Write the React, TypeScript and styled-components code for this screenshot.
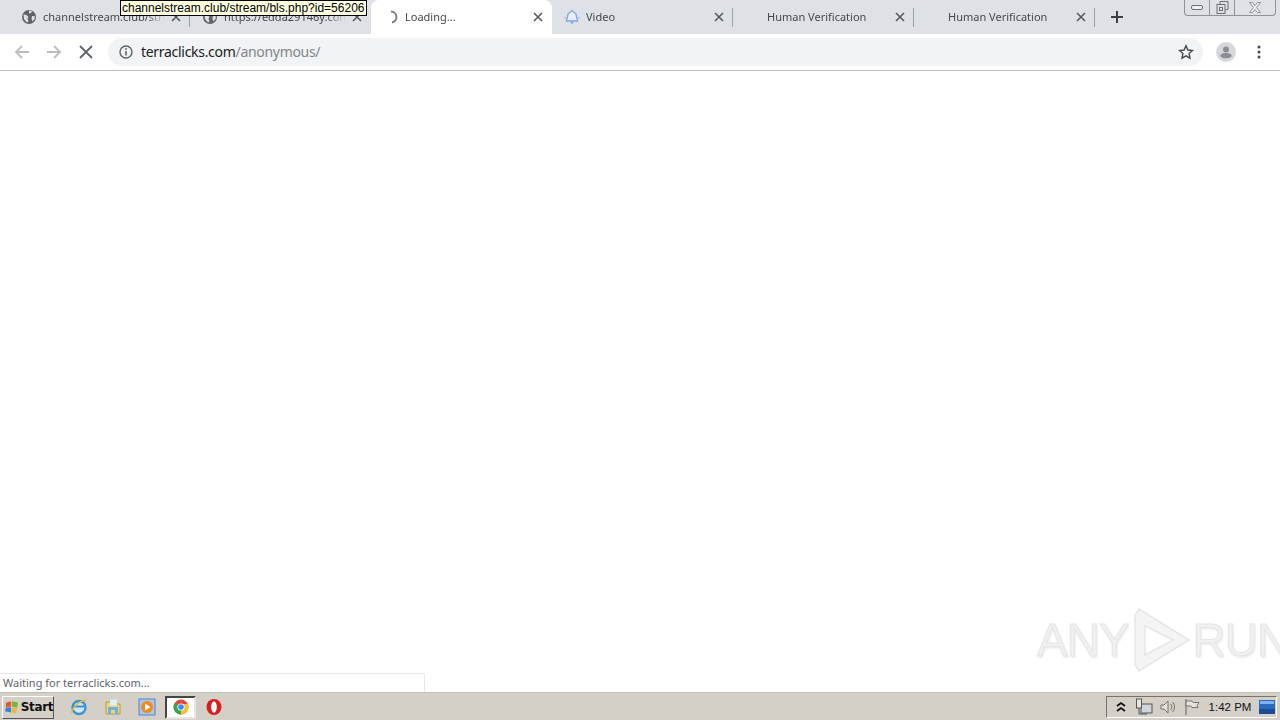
import React from 'react';
import styled, { createGlobalStyle } from 'styled-components';

const GlobalStyle = createGlobalStyle`
  html, body {
    margin: 0;
    padding: 0;
    height: 100%;
    overflow: hidden;
    background: #fff;
  }
  #root {
    height: 100%;
  }
`;

const Page = styled.div`
  position: relative;
  width: 1280px;
  height: 720px;
  display: flex;
  flex-direction: column;
  font-family: "Noto Sans", "Open Sans", sans-serif;
  color: #3c4043;
`;

const TabStrip = styled.div`
  height: 34px;
  flex: none;
  display: flex;
  align-items: flex-start;
  padding-left: 9px;
  background: #dee1e6;
`;

const Tab = styled.div<{ $active?: boolean; $divider?: boolean }>`
  position: relative;
  width: 181px;
  height: 34px;
  flex: none;
  box-sizing: border-box;
  display: flex;
  align-items: center;
  padding: 0 9px 0 12px;
  background: ${p => (p.$active ? '#fff' : 'transparent')};
  border-radius: ${p => (p.$active ? '8px 8px 0 0' : '0')};
  &::after {
    content: "";
    display: ${p => (p.$divider ? 'block' : 'none')};
    position: absolute;
    right: 0;
    top: 8px;
    width: 1px;
    height: 19px;
    background: #9aa0a6;
  }
`;

const Favicon = styled.span`
  width: 16px;
  height: 16px;
  flex: none;
  margin-right: 6px;
  display: flex;
`;

const TabTitle = styled.span<{ $offset?: number }>`
  flex: 1;
  min-width: 0;
  margin-left: ${p => p.$offset ?? 0}px;
  overflow: hidden;
  white-space: nowrap;
  font-size: 11px;
  line-height: 16px;
  color: #45484c;
  -webkit-mask-image: linear-gradient(to right, #000 85%, transparent);
  mask-image: linear-gradient(to right, #000 85%, transparent);
`;

const TabClose = styled.svg`
  width: 10px;
  height: 10px;
  flex: none;
  margin-left: 6px;
`;

const NewTab = styled.svg`
  width: 14px;
  height: 14px;
  flex: none;
  margin: 10px 0 0 15px;
`;

const WindowControls = styled.div`
  margin-left: auto;
  margin-right: 4px;
  width: 92px;
  height: 16px;
  flex: none;
  box-sizing: border-box;
  display: grid;
  grid-template-columns: 25px 25px 1fr;
  border: 1px solid #8e9198;
  border-top: none;
  border-radius: 0 0 4px 4px;
`;

const WindowButton = styled.div<{ $divider?: boolean }>`
  display: flex;
  align-items: center;
  justify-content: center;
  border-right: ${p => (p.$divider ? '1px solid #8e9198' : 'none')};
`;

const Toolbar = styled.div`
  height: 37px;
  flex: none;
  box-sizing: border-box;
  display: flex;
  align-items: center;
  padding: 0 13px 1px 14px;
  background: #fff;
  border-bottom: 1px solid #bcbcbc;
`;

const NavIcon = styled.svg<{ $gap?: number }>`
  width: 16px;
  height: 16px;
  flex: none;
  margin-right: ${p => p.$gap ?? 0}px;
`;

const AddressBar = styled.div`
  width: 1095px;
  height: 28px;
  flex: none;
  box-sizing: border-box;
  display: flex;
  align-items: center;
  padding: 0 9px 0 11px;
  margin-right: 13px;
  background: #f1f3f4;
  border-radius: 14px;
`;

const Url = styled.div`
  flex: 1;
  margin-left: 8px;
  font-size: 14px;
  letter-spacing: -0.3px;
  white-space: nowrap;
  color: #202124;
`;

const UrlPath = styled.span`
  color: #80868b;
`;

const Avatar = styled.svg`
  width: 20px;
  height: 20px;
  flex: none;
  margin-right: 21px;
`;

const Content = styled.div`
  flex: 1;
  background: #fff;
  display: flex;
  align-items: flex-end;
`;

const StatusBubble = styled.div`
  width: 425px;
  height: 19px;
  box-sizing: border-box;
  padding-left: 3px;
  font-size: 11px;
  line-height: 18px;
  color: #5f6368;
  background: #fff;
  border-top: 1px solid #e8e8e8;
  border-right: 1px solid #e8e8e8;
  border-radius: 0 3px 0 0;
`;

const Taskbar = styled.div`
  height: 28px;
  flex: none;
  box-sizing: border-box;
  display: flex;
  align-items: center;
  padding: 1px 3px 0 2px;
  background: #d4d0c8;
  border-top: 1px solid #bfbbb2;
`;

const StartButton = styled.div`
  width: 52px;
  height: 23px;
  flex: none;
  box-sizing: border-box;
  display: flex;
  align-items: center;
  gap: 2px;
  padding-left: 2px;
  margin-right: 16px;
  font-family: "DejaVu Sans", sans-serif;
  font-size: 12px;
  font-weight: 700;
  letter-spacing: -0.4px;
  color: #111;
  border: 1px solid;
  border-color: #fff #555 #555 #fff;
`;

const QuickIcon = styled.svg<{ $gap?: number }>`
  width: 18px;
  height: 18px;
  flex: none;
  margin-right: ${p => p.$gap ?? 0}px;
`;

const ActiveApp = styled.div`
  width: 31px;
  height: 23px;
  flex: none;
  box-sizing: border-box;
  margin-right: 9px;
  display: flex;
  align-items: center;
  justify-content: center;
  background: #fff;
  border: 2px solid;
  border-color: #444 #e8e6e0 #e8e6e0 #444;
`;

const Tray = styled.div`
  margin-left: auto;
  width: 171px;
  height: 22px;
  flex: none;
  box-sizing: border-box;
  display: flex;
  align-items: center;
  padding-left: 5px;
  border: 1px solid;
  border-color: #77736a #fff #fff #77736a;
`;

const TrayIcon = styled.svg<{ $gap?: number }>`
  width: 18px;
  height: 18px;
  flex: none;
  margin-right: ${p => p.$gap ?? 0}px;
`;

const Clock = styled.span`
  width: 58px;
  flex: none;
  text-align: center;
  font-family: "Liberation Sans", sans-serif;
  font-size: 11.5px;
  color: #111;
`;

const LinkTooltip = styled.div`
  position: absolute;
  left: 120px;
  top: 0;
  height: 16px;
  box-sizing: border-box;
  padding: 0 2px 0 1px;
  background: #ffffe1;
  border: 1px solid #000;
  font-family: "Liberation Sans", sans-serif;
  font-size: 12px;
  line-height: 14px;
  white-space: nowrap;
  color: #000;
`;

const Watermark = styled.div`
  position: absolute;
  left: 1037px;
  top: 608px;
  display: flex;
  align-items: center;
  gap: 2px;
  font-family: "Liberation Sans", sans-serif;
  font-size: 46px;
  font-weight: 400;
  letter-spacing: -1px;
  color: #f1f1f1;
  -webkit-text-stroke: 1px #e6e6e6;
  text-shadow: 1px 2px 2px #ececec;
`;

const WatermarkLogo = styled.svg`
  width: 60px;
  height: 64px;
  flex: none;
`;

const CloseGlyph = () => (
  <TabClose viewBox="0 0 10 10">
    <path d="M1 1l8 8M9 1l-8 8" stroke="#55585c" strokeWidth="1.6" />
  </TabClose>
);

const Globe = () => (
  <Favicon>
    <svg viewBox="0 0 16 16" width="16" height="16">
      <circle cx="8" cy="8" r="7" fill="#5f6368" />
      <path d="M2.5 5.5l3 .5 2 2-1 1.5 1 3-1.5 1L3 10zM8 1.5l3 .5-1 2-2 .5zM11 7l3 .3-.6 3-2 2.2-.9-3z" fill="#dee1e6" />
    </svg>
  </Favicon>
);

const Spinner = () => (
  <Favicon>
    <svg viewBox="0 0 16 16" width="16" height="16">
      <path d="M8 2.5a5.5 5.5 0 0 1 1 10.9" fill="none" stroke="#7b8087" strokeWidth="2" />
    </svg>
  </Favicon>
);

const VideoIcon = () => (
  <Favicon>
    <svg viewBox="0 0 16 16" width="16" height="16">
      <path d="M8 1.5l4 3.5 1.5 7h-11L4 5z" fill="#e6edf8" stroke="#7ea6e0" strokeWidth="1.3" />
      <circle cx="1.3" cy="9" r="1" fill="#a9c4ec" />
      <circle cx="14.7" cy="9" r="1" fill="#a9c4ec" />
      <circle cx="8" cy="13.5" r="1.3" fill="#7ea6e0" />
    </svg>
  </Favicon>
);

export default function App() {
  return (
    <Page>
      <GlobalStyle />
      <TabStrip>
        <Tab $divider>
          <Globe />
          <TabTitle>channelstream.club/stream/bls.php</TabTitle>
          <CloseGlyph />
        </Tab>
        <Tab>
          <Globe />
          <TabTitle>https://edda29146y.com/watch</TabTitle>
          <CloseGlyph />
        </Tab>
        <Tab $active>
          <Spinner />
          <TabTitle>Loading...</TabTitle>
          <CloseGlyph />
        </Tab>
        <Tab $divider>
          <VideoIcon />
          <TabTitle>Video</TabTitle>
          <CloseGlyph />
        </Tab>
        <Tab $divider>
          <TabTitle $offset={22}>Human Verification</TabTitle>
          <CloseGlyph />
        </Tab>
        <Tab $divider>
          <TabTitle $offset={22}>Human Verification</TabTitle>
          <CloseGlyph />
        </Tab>
        <NewTab viewBox="0 0 14 14">
          <path d="M7 1v12M1 7h12" stroke="#3c4043" strokeWidth="2" />
        </NewTab>
        <WindowControls>
          <WindowButton $divider>
            <svg width="12" height="6" viewBox="0 0 12 6">
              <rect x="0.5" y="0.5" width="11" height="4" rx="1.5" fill="#eef0f3" stroke="#6b6e73" />
            </svg>
          </WindowButton>
          <WindowButton $divider>
            <svg width="13" height="13" viewBox="0 0 13 13">
              <path d="M4 3V.5h8v8H9.5" fill="none" stroke="#6b6e73" />
              <rect x="1" y="3.5" width="8" height="9" fill="none" stroke="#6b6e73" />
              <rect x="3.5" y="6.5" width="3" height="3" fill="none" stroke="#6b6e73" />
            </svg>
          </WindowButton>
          <WindowButton>
            <svg width="14" height="11" viewBox="0 0 14 11">
              <path d="M1.5.5l3 0 2.5 3 2.500-3 3 0-4 5 4 5-3 0-2.500-3-2.500 3-3 0 4-5z" fill="#eef0f3" stroke="#7b7e83" strokeWidth="0.8" />
            </svg>
          </WindowButton>
        </WindowControls>
      </TabStrip>

      <Toolbar>
        <NavIcon viewBox="0 0 16 16" $gap={16}>
          <path d="M15 8H2M8 2L2 8l6 6" fill="none" stroke="#babcbe" strokeWidth="1.8" />
        </NavIcon>
        <NavIcon viewBox="0 0 16 16" $gap={16}>
          <path d="M1 8h13M8 2l6 6-6 6" fill="none" stroke="#babcbe" strokeWidth="1.8" />
        </NavIcon>
        <NavIcon viewBox="0 0 16 16" $gap={14}>
          <path d="M2 2l12 12M14 2L2 14" fill="none" stroke="#5f6368" strokeWidth="1.8" />
        </NavIcon>
        <AddressBar>
          <svg width="14" height="14" viewBox="0 0 14 14">
            <circle cx="7" cy="7" r="6" fill="none" stroke="#5f6368" strokeWidth="1.4" />
            <path d="M7 6v4.500" stroke="#5f6368" strokeWidth="1.6" />
            <circle cx="7" cy="4" r="0.9" fill="#5f6368" />
          </svg>
          <Url>
            terraclicks.com<UrlPath>/anonymous/</UrlPath>
          </Url>
          <svg width="16" height="16" viewBox="0 0 16 16">
            <path d="M8 1.800l1.900 4.200 4.600.5-3.400 3.100.9 4.500L8 11.800l-4 2.300.9-4.500L1.500 6.500l4.600-.5z" fill="none" stroke="#45484c" strokeWidth="1.400" />
          </svg>
        </AddressBar>
        <Avatar viewBox="0 0 20 20">
          <circle cx="10" cy="10" r="10" fill="#d5d7da" />
          <circle cx="10" cy="7.500" r="3" fill="#8a8d91" />
          <path d="M4 14c1-2.500 3.500-3 6-3s5 .5 6 3c-1.200 1.500-3.500 2.300-6 2.300S5.200 15.500 4 14z" fill="#8a8d91" />
        </Avatar>
        <svg width="4" height="14" viewBox="0 0 4 14">
          <circle cx="2" cy="2" r="1.500" fill="#45484c" />
          <circle cx="2" cy="7" r="1.500" fill="#45484c" />
          <circle cx="2" cy="12" r="1.500" fill="#45484c" />
        </svg>
      </Toolbar>

      <Content>
        <StatusBubble>Waiting for terraclicks.com...</StatusBubble>
      </Content>

      <Taskbar>
        <StartButton>
          <svg width="16" height="16" viewBox="0 0 16 16">
            <path d="M1 3l6-1.500v6L1 8.500z" fill="#e2592a" />
            <path d="M8 1.300l7 1.500-1 6-6-1z" fill="#79b53b" />
            <path d="M1 9l6-.7v6L0 13z" fill="#3f7fd6" />
            <path d="M8 8.500l6 1-1 6-5-1.300z" fill="#f2b632" />
          </svg>
          Start
        </StartButton>
        <QuickIcon viewBox="0 0 18 18" $gap={16}>
          <circle cx="9" cy="9.500" r="6.500" fill="#cfe6f7" stroke="#3a92d4" strokeWidth="2.400" />
          <path d="M4 8.500h10" stroke="#3a92d4" strokeWidth="2" />
          <path d="M2 15C1 12 8 3 16 2" fill="none" stroke="#e6b93b" strokeWidth="1.500" />
        </QuickIcon>
        <QuickIcon viewBox="0 0 18 18" $gap={16}>
          <path d="M2 4h5l1 2h8v10H2z" fill="#efd583" stroke="#b89a45" />
          <rect x="6" y="1.500" width="7" height="6" fill="#dff0f5" />
          <path d="M4 16V9h10v7h-3v-4H7v4z" fill="#6fb2d8" />
        </QuickIcon>
        <QuickIcon viewBox="0 0 18 18" $gap={9}>
          <rect x="1" y="1" width="16" height="16" fill="#a9c6e8" stroke="#4f86c6" />
          <circle cx="9" cy="9" r="6" fill="#f08a1d" />
          <path d="M7 5.500L12.500 9 7 12.500z" fill="#fff" />
        </QuickIcon>
        <ActiveApp>
          <svg width="16" height="16" viewBox="0 0 16 16">
            <circle cx="8" cy="8" r="7.500" fill="#e0483e" />
            <path d="M8 8L1.500 4.300A7.500 7.500 0 0 0 8 15.500z" fill="#36a852" />
            <path d="M8 8v7.500A7.500 7.500 0 0 0 14.900 5H8z" fill="#fbc02d" />
            <circle cx="8" cy="8" r="3.600" fill="#fff" />
            <circle cx="8" cy="8" r="2.800" fill="#4285f4" />
          </svg>
        </ActiveApp>
        <QuickIcon viewBox="0 0 18 18">
          <ellipse cx="9" cy="9" rx="7.500" ry="8" fill="#d81f1f" />
          <ellipse cx="9" cy="9" rx="2.800" ry="5.800" fill="#fff" />
        </QuickIcon>
        <Tray>
          <TrayIcon viewBox="0 0 18 18" $gap={5}>
            <path d="M5 8l4-3 4 3M5 13l4-3 4 3" fill="none" stroke="#111" strokeWidth="1.800" />
          </TrayIcon>
          <TrayIcon viewBox="0 0 18 18" $gap={6}>
            <rect x="6" y="6" width="11" height="9" fill="#cfd6dc" stroke="#555" />
            <rect x="1.500" y="1" width="5" height="9" fill="#e8e6e0" stroke="#555" />
            <path d="M4 10v6h8" fill="none" stroke="#555" />
          </TrayIcon>
          <TrayIcon viewBox="0 0 18 18" $gap={6}>
            <path d="M2 7h3l4-4v12l-4-4H2z" fill="#e5e3dd" stroke="#77736a" />
            <path d="M11.500 6a4 4 0 0 1 0 6M13.500 4a7 7 0 0 1 0 10" fill="none" stroke="#77736a" />
          </TrayIcon>
          <TrayIcon viewBox="0 0 18 18">
            <path d="M3 1v16" stroke="#77736a" strokeWidth="1.200" />
            <path d="M3 3h6l1 1.500h6l-2 3 1 2H9L8 8H3z" fill="#e5e3dd" stroke="#77736a" />
          </TrayIcon>
          <Clock>1:42 PM</Clock>
          <svg width="16" height="14" viewBox="0 0 16 14">
            <rect width="16" height="14" fill="#2a6bc2" />
            <rect y="9" width="16" height="5" fill="#1c4c95" />
            <rect x="1" y="1" width="14" height="3" fill="#7fb2e8" />
          </svg>
        </Tray>
      </Taskbar>

      <LinkTooltip>channelstream.club/stream/bls.php?id=56206</LinkTooltip>

      <Watermark>
        <span>ANY</span>
        <WatermarkLogo viewBox="0 0 60 64">
          <path d="M4 8l4-7 50 31-50 31-4-7z" fill="#f4f4f4" stroke="#e6e6e6" strokeWidth="1.500" />
          <path d="M14 18l28 14-28 15z" fill="#fff" stroke="#e6e6e6" strokeWidth="1.500" />
        </WatermarkLogo>
        <span>RUN</span>
      </Watermark>
    </Page>
  );
}
